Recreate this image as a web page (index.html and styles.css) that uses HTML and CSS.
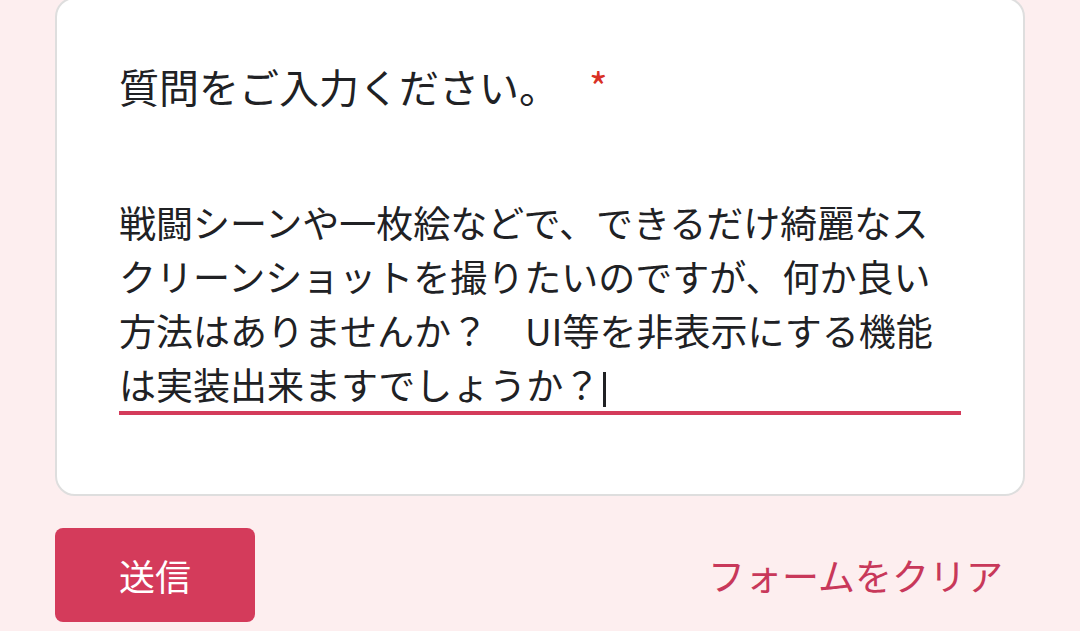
FILE: index.html
```html
<!DOCTYPE html>
<html lang="ja">
<head>
    <meta charset="UTF-8">
    <meta name="viewport" content="width=device-width, initial-scale=1.0">
    <title>質問フォーム</title>
    <link rel="stylesheet" href="styles.css">
</head>
<body>
    <main class="form">
        <div class="question-card">
            <div class="question-title">質問をご入力ください。<span class="required">*</span></div>
            <div class="answer">戦闘シーンや一枚絵などで、できるだけ綺麗なスクリーンショットを撮りたいのですが、何か良い方法はありませんか？　UI等を非表示にする機能は実装出来ますでしょうか？<span class="caret"></span></div>
        </div>
        <div class="actions">
            <button class="submit">送信</button>
            <button class="clear">フォームをクリア</button>
        </div>
    </main>
</body>
</html>
```

FILE: styles.css
```css
body {
    font-family: "Noto Sans CJK JP", "Noto Sans", sans-serif;
    background-color: #fdeeef;
    margin: 0;
    padding: 0 55px;
    color: #202124;
}
.question-card {
    margin-top: -3px;
    background-color: white;
    border: 2px solid #dedede;
    border-radius: 20px;
    padding: 57px 62px 79px 62px;
}
.question-title {
    font-size: 40px;
    line-height: 60px;
}
.required {
    color: #d93025;
    margin-left: 30px;
}
.answer {
    margin-top: 79px;
    font-size: 37px;
    line-height: 54px;
    border-bottom: 4px solid #d43b5b;
}
.caret {
    display: inline-block;
    width: 3px;
    height: 35px;
    margin-left: 3px;
    background: #202124;
    vertical-align: -7px;
}
.actions {
    display: flex;
    justify-content: space-between;
    align-items: center;
    margin-top: 32px;
}
.submit {
    width: 200px;
    height: 94px;
    border: none;
    border-radius: 8px;
    background-color: #d43b5b;
    color: white;
    font-family: inherit;
    font-size: 36px;
}
.clear {
    background: none;
    border: none;
    color: #c8385a;
    font-family: inherit;
    font-size: 37px;
    padding: 0 22px;
}
```
